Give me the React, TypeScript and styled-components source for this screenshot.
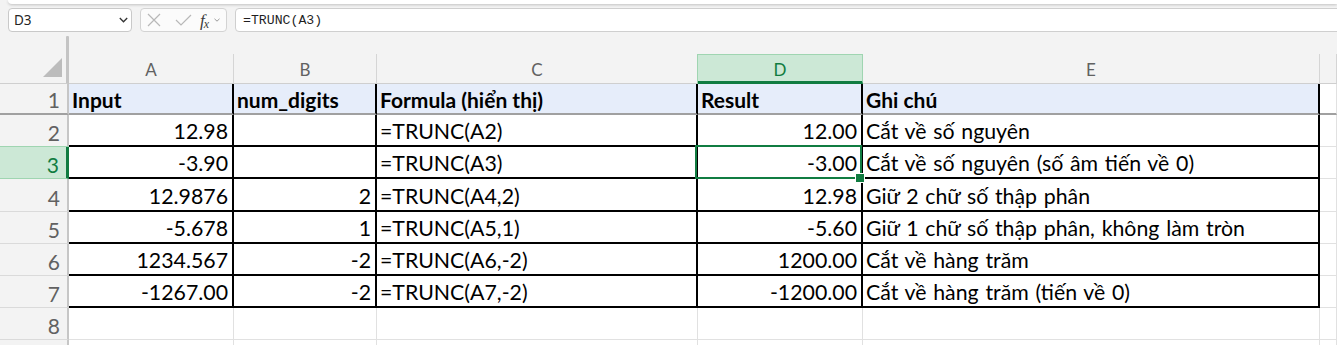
import React from "react";
import styled, { createGlobalStyle, css } from "styled-components";

const GREEN = "#107c41";
const GREEN_SOFT = "#cce8d6";
const GREEN_EDGE = "#9fd5b1";
const SHEET_FONT = `Lato, "Noto Sans", "DejaVu Sans", sans-serif`;

type Align = "left" | "right";
type CellKind = "title" | "data" | "blank";

interface CellData {
  text: string;
  align: Align;
}

const COLUMNS = ["A", "B", "C", "D", "E", "F"];
const SELECTED_COL = "D";
const SELECTED_ROW = 3;

const L = (text: string): CellData => ({ text, align: "left" });
const R = (text: string): CellData => ({ text, align: "right" });

const TABLE: CellData[][] = [
  [L("Input"), L("num_digits"), L("Formula (hiển thị)"), L("Result"), L("Ghi chú")],
  [R("12.98"), R(""), L("=TRUNC(A2)"), R("12.00"), L("Cắt về số nguyên")],
  [R("-3.90"), R(""), L("=TRUNC(A3)"), R("-3.00"), L("Cắt về số nguyên (số âm tiến về 0)")],
  [R("12.9876"), R("2"), L("=TRUNC(A4,2)"), R("12.98"), L("Giữ 2 chữ số thập phân")],
  [R("-5.678"), R("1"), L("=TRUNC(A5,1)"), R("-5.60"), L("Giữ 1 chữ số thập phân, không làm tròn")],
  [R("1234.567"), R("-2"), L("=TRUNC(A6,-2)"), R("1200.00"), L("Cắt về hàng trăm")],
  [R("-1267.00"), R("-2"), L("=TRUNC(A7,-2)"), R("-1200.00"), L("Cắt về hàng trăm (tiến về 0)")],
];

const TOTAL_ROWS = 9;

const GlobalStyle = createGlobalStyle`
  html, body {
    margin: 0;
    padding: 0;
    background: #f3f3f3;
    overflow: hidden;
  }
  * {
    box-sizing: border-box;
  }
`;

const Page = styled.div`
  width: 1337px;
  height: 345px;
  overflow: hidden;
  display: flex;
  flex-direction: column;
  background: #f3f3f3;
`;

const RibbonEdge = styled.div`
  flex: none;
  height: 4px;
  margin-left: 8px;
  background: #fff;
  border-bottom-left-radius: 6px;
  box-shadow: 0 1px 3px rgba(0, 0, 0, 0.2);
`;

const FormulaBar = styled.div`
  flex: none;
  display: flex;
  gap: 8px;
  height: 24px;
  margin-top: 4px;
  padding-left: 8px;
`;

const NameBox = styled.div`
  width: 124px;
  display: flex;
  align-items: center;
  justify-content: space-between;
  padding: 0 3px 0 5px;
  background: #fff;
  border: 1px solid #c9c9c9;
  border-radius: 4px;
  font-family: "Noto Sans", "Open Sans", sans-serif;
  font-size: 13.5px;
  color: #242424;
`;

const FxBox = styled.div`
  width: 87px;
  display: flex;
  align-items: center;
  padding-left: 6px;
  background: #fbfbfb;
  border: 1px solid #d3d3d3;
  border-radius: 4px;
`;

const Glyph = styled.svg<{ $gap?: number }>`
  flex: none;
  margin-left: ${(p) => p.$gap ?? 0}px;
  overflow: visible;
`;

const FxLabel = styled.span`
  margin-left: 8px;
  font-family: "Liberation Serif", serif;
  font-style: italic;
  font-size: 17px;
  line-height: 1;
  color: #3b3b3b;
`;

const FxSub = styled.span`
  font-size: 12px;
  position: relative;
  top: 2px;
  margin-left: -1px;
`;

const FormulaInput = styled.div`
  flex: 1;
  margin-right: -8px;
  display: flex;
  align-items: center;
  padding-left: 7px;
  background: #fff;
  border: 1px solid #cfcfcf;
  border-radius: 4px;
  font-family: "Liberation Mono", monospace;
  font-size: 13.2px;
  color: #1f1f1f;
`;

const SplitGap = styled.div`
  flex: none;
  height: 22px;
  display: flex;
  align-items: flex-end;
`;

const SplitHandle = styled.div`
  width: 3px;
  height: 18px;
  margin-left: 66px;
  background: #c4c4c4;
  border-radius: 1px 1px 0 0;
`;

const Sheet = styled.div`
  flex: none;
  display: grid;
  grid-template-columns: 69px 165px 143px 321px 165px 457px 1fr;
  grid-template-rows: 30px 31px 32px 32px 33px 32px 32px 32px 32px 20px;
`;

const Corner = styled.div`
  display: flex;
  align-items: flex-end;
  justify-content: flex-end;
  padding: 0 4px 6px 0;
  border-right: 3px solid #c4c4c4;
  border-bottom: 1px solid #cfcfcf;
`;

const ColHead = styled.div<{ $selected?: boolean }>`
  display: flex;
  align-items: flex-end;
  justify-content: center;
  padding-bottom: ${(p) => (p.$selected ? 3 : 5)}px;
  font-family: ${SHEET_FONT};
  font-size: 17px;
  line-height: 1;
  color: #616161;
  border-right: 1px solid #d5d5d5;
  border-bottom: 1px solid #cfcfcf;

  ${(p) =>
    p.$selected &&
    css`
      background: ${GREEN_SOFT};
      color: ${GREEN};
      border-top: 1px solid ${GREEN_EDGE};
      border-right-color: ${GREEN_EDGE};
      border-bottom: 3px solid ${GREEN};
      box-shadow: -1px 0 0 ${GREEN_EDGE};
    `}
`;

const RowHead = styled.div<{ $selected?: boolean; $frozen?: boolean }>`
  display: flex;
  align-items: flex-end;
  justify-content: flex-end;
  padding: 0 7px 3px 0;
  font-family: ${SHEET_FONT};
  font-size: 21px;
  line-height: 1;
  color: #616161;
  border-right: 2px solid #c6c6c6;
  border-bottom: ${(p) => (p.$frozen ? "2px solid #a0a0a0" : "1px solid #dadada")};

  ${(p) =>
    p.$selected &&
    css`
      background: ${GREEN_SOFT};
      color: ${GREEN};
      border-right: 3px solid ${GREEN};
      border-bottom-color: ${GREEN_EDGE};
      box-shadow: 0 -1px 0 ${GREEN_EDGE};
    `}
`;

const Cell = styled.div<{ $kind: CellKind; $align: Align; $frozen?: boolean; $active?: boolean }>`
  position: relative;
  display: flex;
  align-items: flex-end;
  justify-content: ${(p) => (p.$align === "right" ? "flex-end" : "flex-start")};
  padding: 0 4px 3px 3px;
  font-family: ${SHEET_FONT};
  font-size: ${(p) => (p.$kind === "title" ? 21 : 21.3)}px;
  word-spacing: ${(p) => (p.$kind === "title" ? 0 : 1.3)}px;
  line-height: 1;
  color: #000;
  white-space: nowrap;
  background: ${(p) => (p.$kind === "title" ? "#e6edfa" : "#fff")};
  font-weight: ${(p) => (p.$kind === "title" ? 700 : 400)};
  border-right: ${(p) => (p.$kind === "blank" ? "1px solid #e1e1e1" : "2px solid #000")};
  border-bottom: ${(p) =>
    p.$frozen ? "2px solid #a0a0a0" : p.$kind === "blank" ? "1px solid #e1e1e1" : "2px solid #000"};

  ${(p) =>
    p.$active &&
    css`
      &::after {
        content: "";
        position: absolute;
        top: -2px;
        left: -3px;
        right: -1px;
        bottom: -2px;
        border: 2px solid ${GREEN};
        z-index: 2;
        pointer-events: none;
      }
      &::before {
        content: "";
        position: absolute;
        right: -4px;
        bottom: -6px;
        width: 8px;
        height: 8px;
        background: ${GREEN};
        border: 1px solid #fff;
        z-index: 3;
      }
    `}
`;

const SelectAll = () => (
  <svg width="19" height="19" viewBox="0 0 19 19">
    <polygon points="19,0 19,19 0,19" fill="#bcbcbc" />
  </svg>
);

const App = () => {
  const rows = Array.from({ length: TOTAL_ROWS }, (_, i) => i + 1);

  return (
    <Page>
      <GlobalStyle />
      <RibbonEdge />
      <FormulaBar>
        <NameBox>
          <span>D3</span>
          <Glyph width="9" height="6" viewBox="0 0 9 6">
            <polyline points="0.8,1 4.5,4.8 8.2,1" fill="none" stroke="#333" strokeWidth="1.3" />
          </Glyph>
        </NameBox>
        <FxBox>
          <Glyph width="14" height="14" viewBox="0 0 14 14">
            <path d="M1 1 L13 13 M13 1 L1 13" stroke="#b8b8b8" strokeWidth="1.2" fill="none" />
          </Glyph>
          <Glyph $gap={14} width="17" height="12" viewBox="0 0 17 12">
            <polyline points="1,6 6,11 16,1" stroke="#b8b8b8" strokeWidth="1.2" fill="none" />
          </Glyph>
          <FxLabel>
            f<FxSub>x</FxSub>
          </FxLabel>
          <Glyph $gap={5} width="6" height="4" viewBox="0 0 6 4">
            <polyline points="0.5,0.8 3,3.2 5.5,0.8" stroke="#9a9a9a" strokeWidth="1" fill="none" />
          </Glyph>
        </FxBox>
        <FormulaInput>=TRUNC(A3)</FormulaInput>
      </FormulaBar>
      <SplitGap>
        <SplitHandle />
      </SplitGap>
      <Sheet>
        <Corner>
          <SelectAll />
        </Corner>
        {COLUMNS.map((c) => (
          <ColHead key={c} $selected={c === SELECTED_COL}>
            {c === "F" ? "" : c}
          </ColHead>
        ))}
        {rows.map((r) => {
          const data = TABLE[r - 1];
          const frozen = r === 1;
          return (
            <React.Fragment key={r}>
              <RowHead $selected={r === SELECTED_ROW} $frozen={frozen}>
                {r < TOTAL_ROWS ? r : ""}
              </RowHead>
              {COLUMNS.map((c, ci) => {
                const cell = data && ci < data.length ? data[ci] : undefined;
                const kind: CellKind = cell ? (frozen ? "title" : "data") : "blank";
                return (
                  <Cell
                    key={c}
                    $kind={kind}
                    $align={cell?.align ?? "left"}
                    $frozen={frozen}
                    $active={c === SELECTED_COL && r === SELECTED_ROW}
                  >
                    {cell?.text}
                  </Cell>
                );
              })}
            </React.Fragment>
          );
        })}
      </Sheet>
    </Page>
  );
};

export default App;
